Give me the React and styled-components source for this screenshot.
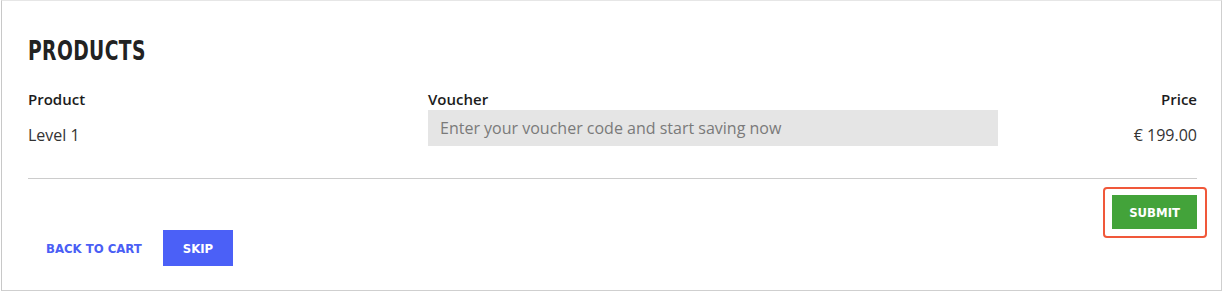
import React from 'react'
import styled, { createGlobalStyle } from 'styled-components'

const GlobalStyle = createGlobalStyle`
  html, body {
    margin: 0;
    padding: 0;
    background: #ffffff;
  }
  body {
    font-family: "Open Sans", "Noto Sans", sans-serif;
    color: #222;
  }
`

const Card = styled.div`
  margin: 0 1px 0 1px;
  width: 1221px;
  height: 291px;
  box-sizing: border-box;
  border: 1px solid #cfcfcf;
  border-top-color: #e6e6e6;
  border-left-color: #c8c8c8;
  background: #fff;
  padding: 30px 24px 0 26px;
`

// condensed display face, squeezed to match the narrow heading type
const Title = styled.h2`
  display: inline-block;
  margin: 0;
  font-family: "DejaVu Sans", sans-serif;
  font-stretch: condensed;
  font-weight: 700;
  font-size: 27px;
  line-height: 40px;
  letter-spacing: 0.5px;
  color: #222;
  text-transform: uppercase;
  transform: scaleX(0.77);
  transform-origin: left center;
`

const Table = styled.div`
  display: grid;
  grid-template-columns: 400px 570px 1fr;
  margin-top: 17px;
`

const HeadCell = styled.div`
  font-size: 15px;
  font-weight: 600;
  line-height: 22px;
  color: #1c1c1c;
  text-align: ${p => (p.$right ? 'right' : 'left')};
`

const Cell = styled.div`
  display: flex;
  align-items: flex-end;
  justify-content: ${p => (p.$right ? 'flex-end' : 'flex-start')};
  height: 36px;
  font-size: 16px;
  color: #333;
`

const VoucherInput = styled.input`
  width: 100%;
  height: 36px;
  box-sizing: border-box;
  border: none;
  outline: none;
  background: #e5e5e5;
  padding: 0 12px;
  font-family: "Open Sans", "Noto Sans", sans-serif;
  font-size: 16px;
  color: #333;

  &::placeholder {
    color: #7a7a7a;
  }
`

const Divider = styled.hr`
  margin: 32px 0 0;
  border: none;
  border-top: 1px solid #cccccc;
`

const SubmitRow = styled.div`
  display: flex;
  justify-content: flex-end;
  margin-top: 8px;
  margin-right: -10px;
`

const Focus = styled.div`
  border: 2px solid #f0583a;
  border-radius: 4px;
  padding: 6px 8px 7px 7px;
`

const Button = styled.button`
  font-family: "DejaVu Sans", sans-serif;
  font-stretch: condensed;
  font-weight: 700;
  font-size: 13px;
  letter-spacing: 0;
  text-transform: uppercase;
  border: none;
  cursor: pointer;
  height: ${p => p.$h || 36}px;
  padding: 0 ${p => p.$px || 18}px;
  background: ${p => p.$bg || 'transparent'};
  color: ${p => p.$color || '#fff'};
`

const Actions = styled.div`
  display: flex;
  align-items: center;
  gap: 3px;
  margin-top: -8px;
`

export default function App() {
  return (
    <>
      <GlobalStyle />
      <Card>
        <Title>Products</Title>
        <Table>
          <HeadCell>Product</HeadCell>
          <HeadCell>Voucher</HeadCell>
          <HeadCell $right>Price</HeadCell>
          <Cell>Level 1</Cell>
          <Cell>
            <VoucherInput placeholder="Enter your voucher code and start saving now" />
          </Cell>
          <Cell $right>€ 199.00</Cell>
        </Table>
        <Divider />
        <SubmitRow>
          <Focus>
            <Button $bg="#43a33a" $h={34} $px={17}>Submit</Button>
          </Focus>
        </SubmitRow>
        <Actions>
          <Button $color="#4a5ef5" $px={18}>Back to cart</Button>
          <Button $bg="#4b60f7" $px={20}>Skip</Button>
        </Actions>
      </Card>
    </>
  )
}
